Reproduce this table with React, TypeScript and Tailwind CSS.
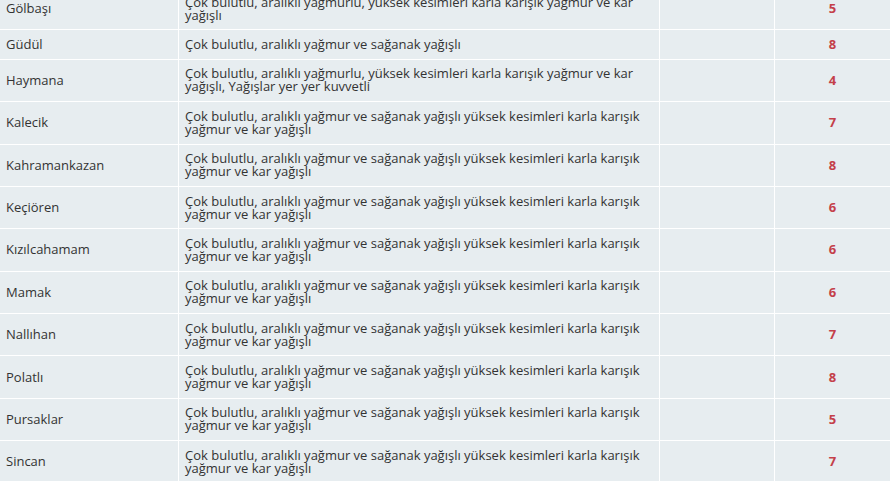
import React from "react";

const rows: [string, string, number][] = [
  ["Gölbaşı", "Çok bulutlu, aralıklı yağmurlu, yüksek kesimleri karla karışık yağmur ve kar yağışlı", 5],
  ["Güdül", "Çok bulutlu, aralıklı yağmur ve sağanak yağışlı", 8],
  ["Haymana", "Çok bulutlu, aralıklı yağmurlu, yüksek kesimleri karla karışık yağmur ve kar yağışlı, Yağışlar yer yer kuvvetli", 4],
  ["Kalecik", "Çok bulutlu, aralıklı yağmur ve sağanak yağışlı yüksek kesimleri karla karışık yağmur ve kar yağışlı", 7],
  ["Kahramankazan", "Çok bulutlu, aralıklı yağmur ve sağanak yağışlı yüksek kesimleri karla karışık yağmur ve kar yağışlı", 8],
  ["Keçiören", "Çok bulutlu, aralıklı yağmur ve sağanak yağışlı yüksek kesimleri karla karışık yağmur ve kar yağışlı", 6],
  ["Kızılcahamam", "Çok bulutlu, aralıklı yağmur ve sağanak yağışlı yüksek kesimleri karla karışık yağmur ve kar yağışlı", 6],
  ["Mamak", "Çok bulutlu, aralıklı yağmur ve sağanak yağışlı yüksek kesimleri karla karışık yağmur ve kar yağışlı", 6],
  ["Nallıhan", "Çok bulutlu, aralıklı yağmur ve sağanak yağışlı yüksek kesimleri karla karışık yağmur ve kar yağışlı", 7],
  ["Polatlı", "Çok bulutlu, aralıklı yağmur ve sağanak yağışlı yüksek kesimleri karla karışık yağmur ve kar yağışlı", 8],
  ["Pursaklar", "Çok bulutlu, aralıklı yağmur ve sağanak yağışlı yüksek kesimleri karla karışık yağmur ve kar yağışlı", 5],
  ["Sincan", "Çok bulutlu, aralıklı yağmur ve sağanak yağışlı yüksek kesimleri karla karışık yağmur ve kar yağışlı", 7],
];

export default function App() {
  return (
    <div className="w-[890px] h-[481px] overflow-hidden bg-[#e7edf0] text-[#333] text-[13px] leading-[13px]" style={{ fontFamily: '"Open Sans", "Noto Sans", sans-serif' }}>
      <div className="-mt-[12px]">
        {rows.map(([name, desc, n]) => (
          <div key={name} className="grid grid-cols-[179px_481px_115px_1fr] border-b border-white">
            <div className="border-r border-white px-[6px] py-[7.7px] flex items-center">{name}</div>
            <div className="border-r border-white px-[6px] py-[7.7px] flex items-center">
              <span className="w-[468px]">{desc}</span>
            </div>
            <div className="border-r border-white"></div>
            <div className="flex items-center justify-center font-bold text-[13px] text-[#c4404a]">{n}</div>
          </div>
        ))}
      </div>
    </div>
  );
}
